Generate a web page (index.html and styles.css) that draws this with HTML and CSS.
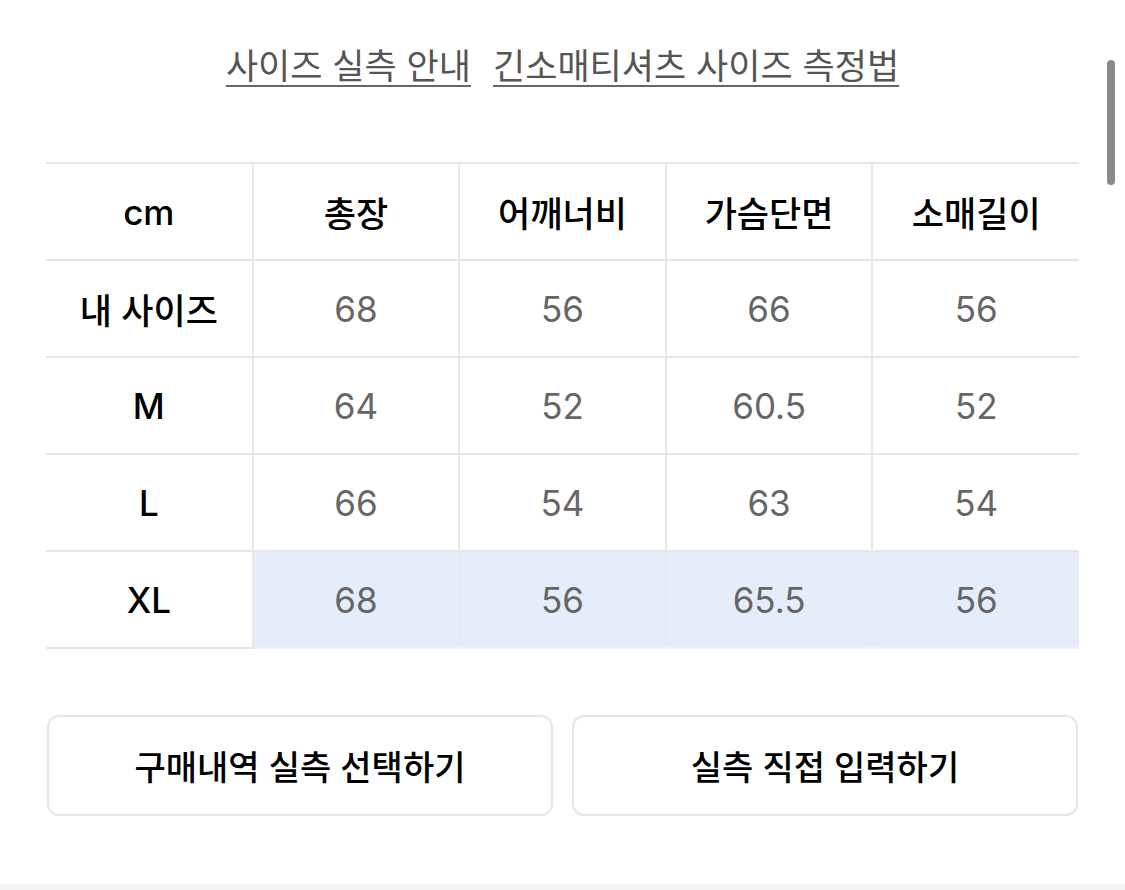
FILE: index.html
```html
<!DOCTYPE html>
<html lang="ko">
<head>
<meta charset="utf-8">
<title>사이즈 실측</title>
<link rel="stylesheet" href="styles.css">
</head>
<body>
<div class="page">
  <nav class="links">
    <a class="link" href="#">사이즈 실측 안내</a>
    <a class="link" href="#">긴소매티셔츠 사이즈 측정법</a>
  </nav>
  <table class="size-table">
    <thead>
      <tr>
        <th class="label">cm</th>
        <th>총장</th>
        <th>어깨너비</th>
        <th>가슴단면</th>
        <th>소매길이</th>
      </tr>
    </thead>
    <tbody>
      <tr>
        <th class="label">내 사이즈</th>
        <td>68</td><td>56</td><td>66</td><td>56</td>
      </tr>
      <tr>
        <th class="label">M</th>
        <td>64</td><td>52</td><td>60.5</td><td>52</td>
      </tr>
      <tr>
        <th class="label">L</th>
        <td>66</td><td>54</td><td>63</td><td>54</td>
      </tr>
      <tr class="selected">
        <th class="label">XL</th>
        <td>68</td><td>56</td><td>65.5</td><td>56</td>
      </tr>
    </tbody>
  </table>
  <div class="actions">
    <button class="btn" type="button">구매내역 실측 선택하기</button>
    <button class="btn" type="button">실측 직접 입력하기</button>
  </div>
</div>
<div class="footer-strip"></div>
<div class="scrollbar"></div>
</body>
</html>
```

FILE: styles.css
```css
html, body {
  margin: 0;
  padding: 0;
  background: #ffffff;
}

body {
  font-family: "Inter", "Noto Sans CJK KR", sans-serif;
  color: #000000;
  width: 1125px;
  height: 890px;
  overflow: hidden;
  position: relative;
}

.page {
  padding: 46px 46px 0 46px;
  height: 838px;
  box-sizing: border-box;
}

.links {
  display: flex;
  justify-content: center;
  gap: 22px;
  height: 40px;
  line-height: 40px;
  margin-bottom: 76px;
}

.link {
  font-size: 35px;
  color: #555555;
  text-decoration: underline;
  text-decoration-thickness: 2px;
  text-underline-offset: 6px;
  text-decoration-color: #666666;
}

.size-table {
  width: 100%;
  border-collapse: collapse;
  table-layout: fixed;
  font-size: 35px;
}

.size-table th,
.size-table td {
  height: 95px;
  padding: 0;
  text-align: center;
  vertical-align: middle;
  border-top: 2px solid #e6e6e6;
  border-bottom: 2px solid #e6e6e6;
  border-left: 2px solid #e9e9e9;
}

.size-table tr > :first-child {
  border-left: none;
}

.size-table thead th,
.size-table th.label {
  font-weight: 500;
  color: #000000;
}

.size-table td {
  color: #666666;
  font-weight: 400;
}

.size-table tr.selected td {
  background: #e6edfa;
  border-bottom-color: #eef2fa;
}

.actions {
  display: flex;
  gap: 19px;
  margin-top: 66px;
  padding: 0 1px;
}

.btn {
  flex: 1;
  height: 101px;
  background: #ffffff;
  border: 2px solid #e6e6e6;
  border-radius: 12px;
  font-family: "Inter", "Noto Sans CJK KR", sans-serif;
  font-size: 34px;
  font-weight: 500;
  color: #000000;
}

.footer-strip {
  position: absolute;
  left: 0;
  right: 0;
  bottom: 0;
  height: 6px;
  background: #f3f3f4;
}

.scrollbar {
  position: absolute;
  top: 60px;
  left: 1107px;
  width: 8px;
  height: 125px;
  border-radius: 4px;
  background: #8a8a8a;
}
```
